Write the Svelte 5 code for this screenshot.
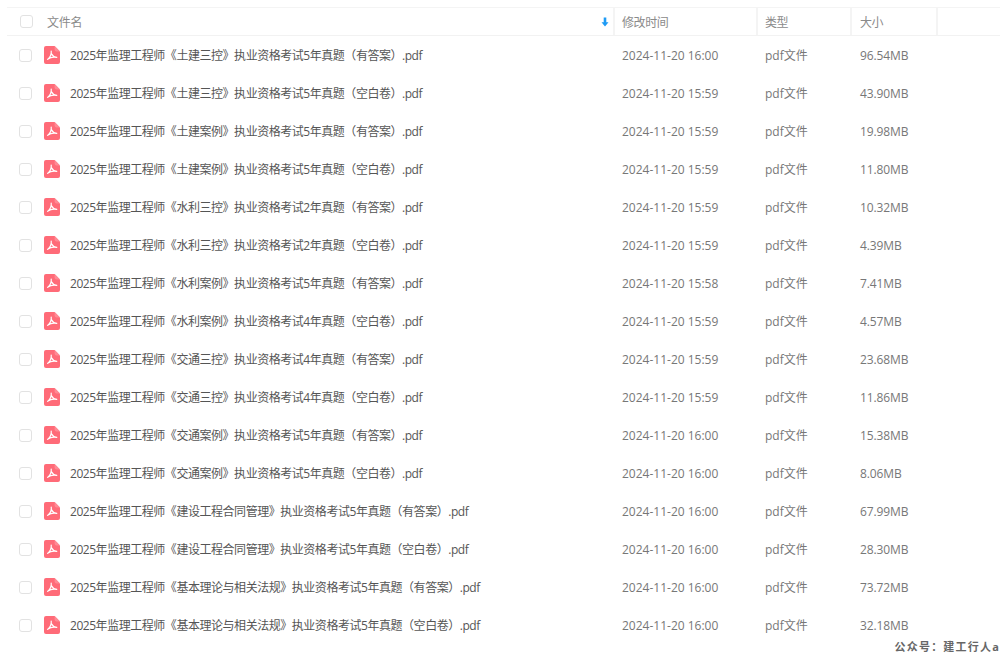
<script>
  const rows = [
    ["2025年监理工程师《土建三控》执业资格考试5年真题（有答案）.pdf", "2024-11-20 16:00", "96.54MB"],
    ["2025年监理工程师《土建三控》执业资格考试5年真题（空白卷）.pdf", "2024-11-20 15:59", "43.90MB"],
    ["2025年监理工程师《土建案例》执业资格考试5年真题（有答案）.pdf", "2024-11-20 15:59", "19.98MB"],
    ["2025年监理工程师《土建案例》执业资格考试5年真题（空白卷）.pdf", "2024-11-20 15:59", "11.80MB"],
    ["2025年监理工程师《水利三控》执业资格考试2年真题（有答案）.pdf", "2024-11-20 15:59", "10.32MB"],
    ["2025年监理工程师《水利三控》执业资格考试2年真题（空白卷）.pdf", "2024-11-20 15:59", "4.39MB"],
    ["2025年监理工程师《水利案例》执业资格考试5年真题（有答案）.pdf", "2024-11-20 15:58", "7.41MB"],
    ["2025年监理工程师《水利案例》执业资格考试4年真题（空白卷）.pdf", "2024-11-20 15:59", "4.57MB"],
    ["2025年监理工程师《交通三控》执业资格考试4年真题（有答案）.pdf", "2024-11-20 15:59", "23.68MB"],
    ["2025年监理工程师《交通三控》执业资格考试4年真题（空白卷）.pdf", "2024-11-20 15:59", "11.86MB"],
    ["2025年监理工程师《交通案例》执业资格考试5年真题（有答案）.pdf", "2024-11-20 16:00", "15.38MB"],
    ["2025年监理工程师《交通案例》执业资格考试5年真题（空白卷）.pdf", "2024-11-20 16:00", "8.06MB"],
    ["2025年监理工程师《建设工程合同管理》执业资格考试5年真题（有答案）.pdf", "2024-11-20 16:00", "67.99MB"],
    ["2025年监理工程师《建设工程合同管理》执业资格考试5年真题（空白卷）.pdf", "2024-11-20 16:00", "28.30MB"],
    ["2025年监理工程师《基本理论与相关法规》执业资格考试5年真题（有答案）.pdf", "2024-11-20 16:00", "73.72MB"],
    ["2025年监理工程师《基本理论与相关法规》执业资格考试5年真题（空白卷）.pdf", "2024-11-20 16:00", "32.18MB"]
  ];
</script>

<div class="page">
  <div class="head">
    <div class="namecol">
      <span class="check headcheck"></span>
      <span class="headname">文件名</span>
      <svg class="sort" viewBox="0 0 8 10" width="8" height="10">
        <path d="M2.7 0.5h2.6v4.7h2.2L4 9.5 0.5 5.2h2.2z" fill="#1e9bf5" />
      </svg>
    </div>
    <div class="th">修改时间</div>
    <div class="th">类型</div>
    <div class="th size">大小</div>
    <div></div>
  </div>

  {#each rows as row}
    <div class="row">
      <span class="check"></span>
      <svg class="pdf" viewBox="0 0 16 18" width="16" height="18">
        <path d="M2 0h8.6L16 5.4V16a2 2 0 0 1-2 2H2a2 2 0 0 1-2-2V2a2 2 0 0 1 2-2z" fill="#ff6b78" />
        <path d="M10.6 0L16 5.4h-3.4a2 2 0 0 1-2-2z" fill="#ff8a94" />
        <path d="M7.2 5.200C7.600 8 6 11.400 3.600 13.400C6 11.500 10 10.800 12.800 11.400C10.400 11 8.400 9.600 7.300 7.400" fill="none" stroke="#fff" stroke-width="1.200" stroke-linecap="round" stroke-linejoin="round" />
      </svg>
      <span class="name">{row[0]}</span>
      <span class="cell">{row[1]}</span>
      <span class="cell">pdf文件</span>
      <span class="cell size">{row[2]}</span>
    </div>
  {/each}

  <div class="mark">公众号：建工行人a</div>
</div>

<style>
  :global(body) {
    margin: 0;
    background: #fff;
  }

  .page {
    width: 1000px;
    height: 654px;
    overflow: hidden;
    position: relative;
    padding-top: 7px;
    box-sizing: border-box;
    font-family: "Open Sans", "Noto Sans CJK SC", sans-serif;
    font-size: 12px;
    color: #777;
  }

  .head {
    margin-left: 7px;
    height: 29px;
    box-sizing: border-box;
    display: grid;
    grid-template-columns: 608px 143px 94px 86px 1fr;
    border-top: 1px solid #f4f4f4;
    border-bottom: 1px solid #f2f2f2;
    color: #8a8a8a;
  }

  .namecol {
    display: flex;
    align-items: center;
    padding-left: 13px;
    border-right: 2px solid #f4f4f4;
    box-sizing: border-box;
  }

  .headname {
    margin-left: 14px;
    letter-spacing: -0.3px;
  }

  .sort {
    margin-left: auto;
    margin-right: 4px;
  }

  .th {
    display: flex;
    align-items: center;
    padding-left: 7px;
    border-right: 2px solid #f4f4f4;
    letter-spacing: -0.4px;
  }

  .th.size {
    padding-left: 8px;
  }

  .check {
    width: 11px;
    height: 11px;
    border: 1px solid #e2e2e2;
    border-radius: 3px;
    box-sizing: content-box;
  }

  .row {
    height: 38px;
    display: grid;
    grid-template-columns: 44px 26px 552px 143px 95px 1fr;
    align-items: center;
  }

  .row .check {
    margin-left: 19px;
  }

  .name {
    color: #555;
    white-space: nowrap;
    letter-spacing: -0.46px;
  }

  .cell {
    white-space: nowrap;
  }

  .cell.size {
    letter-spacing: -0.1px;
  }

  .mark {
    position: absolute;
    right: 0;
    bottom: 0;
    font-size: 11px;
    font-weight: 700;
    color: #666;
    letter-spacing: 1.2px;
    white-space: nowrap;
  }
</style>
